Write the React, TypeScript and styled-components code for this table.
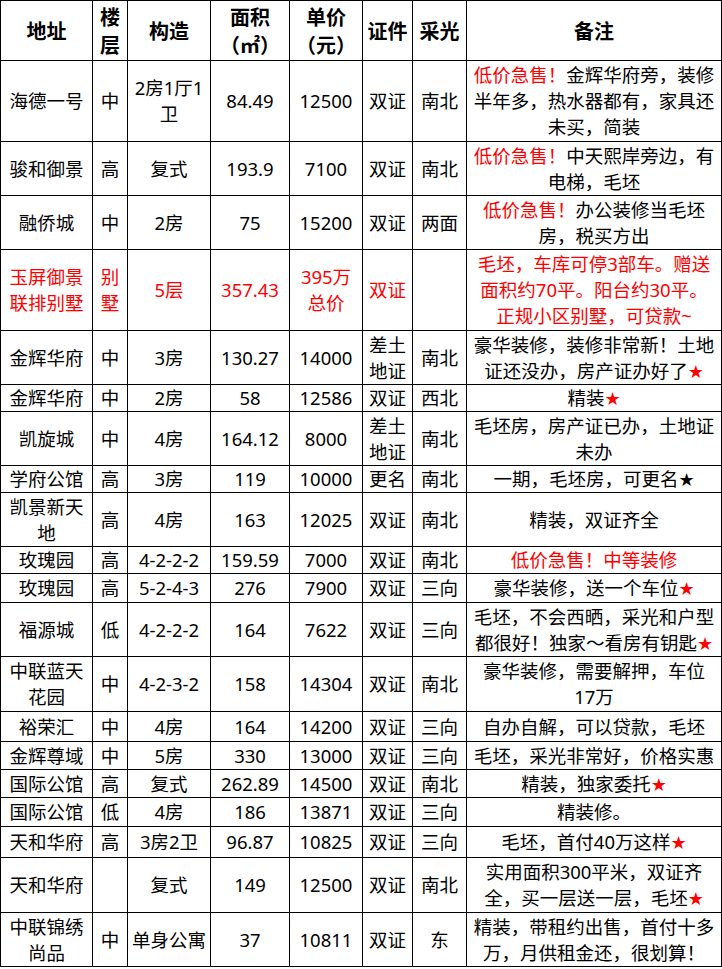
import React from 'react';
import styled, { createGlobalStyle } from 'styled-components';

const GlobalStyle = createGlobalStyle`
  html, body {
    margin: 0;
    padding: 0;
    background: #fff;
  }
  body {
    font-family: "Noto Sans", "Noto Sans CJK SC", sans-serif;
    color: #000;
  }
`;

const Table = styled.table`
  border-collapse: collapse;
  table-layout: fixed;
  width: 721px;
  border: 1px solid #000;
`;

const HeadRow = styled.tr`
  height: 60px;
`;

const BodyRow = styled.tr<{ $h: number }>`
  height: ${p => p.$h}px;
`;

const HeadCell = styled.th`
  border: 1px solid #000;
  padding: 0;
  font-size: 20px;
  line-height: 28px;
  font-weight: 700;
  text-align: center;
  vertical-align: middle;
  font-family: "Noto Sans CJK SC", sans-serif;
`;

const Cell = styled.td<{ $red?: boolean }>`
  border: 1px solid #000;
  padding: 0;
  font-size: 18.5px;
  line-height: 26px;
  text-align: center;
  vertical-align: middle;
  color: ${p => (p.$red ? '#ff0000' : '#000')};
  overflow: hidden;
`;

const Red = styled.span`
  color: #ff0000;
`;

const Star = styled.span<{ $black?: boolean }>`
  color: ${p => (p.$black ? '#000' : '#ff0000')};
  font-family: "DejaVu Sans", sans-serif;
  font-size: 18px;
  line-height: 20px;
`;

const widths = [92, 35, 83, 79, 73, 50, 54, 255];

type Row = {
  h: number;
  red?: boolean;
  cells: React.ReactNode[];
  note: React.ReactNode;
};

const sale = <Red>低价急售！</Red>;
const star = <Star>★</Star>;

const rows: Row[] = [
  {
    h: 81,
    cells: ['海德一号', '中', <>2房1厅1<br />卫</>, '84.49', '12500', '双证', '南北'],
    note: <>{sale}金辉华府旁，装修<br />半年多，热水器都有，家具还<br />未买，简装</>,
  },
  {
    h: 54,
    cells: ['骏和御景', '高', '复式', '193.9', '7100', '双证', '南北'],
    note: <>{sale}中天熙岸旁边，有<br />电梯，毛坯</>,
  },
  {
    h: 54,
    cells: ['融侨城', '中', '2房', '75', '15200', '双证', '两面'],
    note: <>{sale}办公装修当毛坯<br />房，税买方出</>,
  },
  {
    h: 81,
    red: true,
    cells: [<>玉屏御景<br />联排别墅</>, <>别<br />墅</>, '5层', '357.43', <>395万<br />总价</>, '双证', ''],
    note: <>毛坯，车库可停3部车。赠送<br />面积约70平。阳台约30平。<br />正规小区别墅，可贷款~</>,
  },
  {
    h: 54,
    cells: ['金辉华府', '中', '3房', '130.27', '14000', <>差土<br />地证</>, '南北'],
    note: <>豪华装修，装修非常新！土地<br />证还没办，房产证办好了{star}</>,
  },
  {
    h: 27,
    cells: ['金辉华府', '中', '2房', '58', '12586', '双证', '西北'],
    note: <>精装{star}</>,
  },
  {
    h: 54,
    cells: ['凯旋城', '中', '4房', '164.12', '8000', <>差土<br />地证</>, '南北'],
    note: <>毛坯房，房产证已办，土地证<br />未办</>,
  },
  {
    h: 27,
    cells: ['学府公馆', '高', '3房', '119', '10000', '更名', '南北'],
    note: <>一期，毛坯房，可更名<Star $black>★</Star></>,
  },
  {
    h: 54,
    cells: [<>凯景新天<br />地</>, '高', '4房', '163', '12025', '双证', '南北'],
    note: '精装，双证齐全',
  },
  {
    h: 27,
    cells: ['玫瑰园', '高', '4-2-2-2', '159.59', '7000', '双证', '南北'],
    note: <Red>低价急售！中等装修</Red>,
  },
  {
    h: 29,
    cells: ['玫瑰园', '高', '5-2-4-3', '276', '7900', '双证', '三向'],
    note: <>豪华装修，送一个车位{star}</>,
  },
  {
    h: 54,
    cells: ['福源城', '低', '4-2-2-2', '164', '7622', '双证', '三向'],
    note: <>毛坯，不会西晒，采光和户型<br />都很好！独家～看房有钥匙{star}</>,
  },
  {
    h: 55,
    cells: [<>中联蓝天<br />花园</>, '中', '4-2-3-2', '158', '14304', '双证', '南北'],
    note: <>豪华装修，需要解押，车位<br />17万</>,
  },
  {
    h: 30,
    cells: ['裕荣汇', '中', '4房', '164', '14200', '双证', '三向'],
    note: '自办自解，可以贷款，毛坯',
  },
  {
    h: 28,
    cells: ['金辉尊域', '中', '5房', '330', '13000', '双证', '三向'],
    note: '毛坯，采光非常好，价格实惠',
  },
  {
    h: 28,
    cells: ['国际公馆', '高', '复式', '262.89', '14500', '双证', '南北'],
    note: <>精装，独家委托{star}</>,
  },
  {
    h: 29,
    cells: ['国际公馆', '低', '4房', '186', '13871', '双证', '三向'],
    note: '精装修。',
  },
  {
    h: 31,
    cells: ['天和华府', '高', '3房2卫', '96.87', '10825', '双证', '三向'],
    note: <>毛坯，首付40万这样{star}</>,
  },
  {
    h: 55,
    cells: ['天和华府', '', '复式', '149', '12500', '双证', '南北'],
    note: <>实用面积300平米，双证齐<br />全，买一层送一层，毛坯{star}</>,
  },
  {
    h: 54,
    cells: [<>中联锦绣<br />尚品</>, '中', '单身公寓', '37', '10811', '双证', '东'],
    note: <>精装，带租约出售，首付十多<br />万，月供租金还，很划算！</>,
  },
];

const App = () => {
  return (
    <>
      <GlobalStyle />
      <Table>
        <colgroup>
          {widths.map((w, i) => (
            <col key={i} style={{ width: w }} />
          ))}
        </colgroup>
        <thead>
          <HeadRow>
            <HeadCell>地址</HeadCell>
            <HeadCell>楼<br />层</HeadCell>
            <HeadCell>构造</HeadCell>
            <HeadCell>面积<br />（㎡）</HeadCell>
            <HeadCell>单价<br />（元）</HeadCell>
            <HeadCell>证件</HeadCell>
            <HeadCell>采光</HeadCell>
            <HeadCell>备注</HeadCell>
          </HeadRow>
        </thead>
        <tbody>
          {rows.map((r, i) => (
            <BodyRow key={i} $h={r.h}>
              {r.cells.map((c, j) => (
                <Cell key={j} $red={r.red}>
                  {c}
                </Cell>
              ))}
              <Cell $red={r.red}>{r.note}</Cell>
            </BodyRow>
          ))}
        </tbody>
      </Table>
    </>
  );
};

export default App;
